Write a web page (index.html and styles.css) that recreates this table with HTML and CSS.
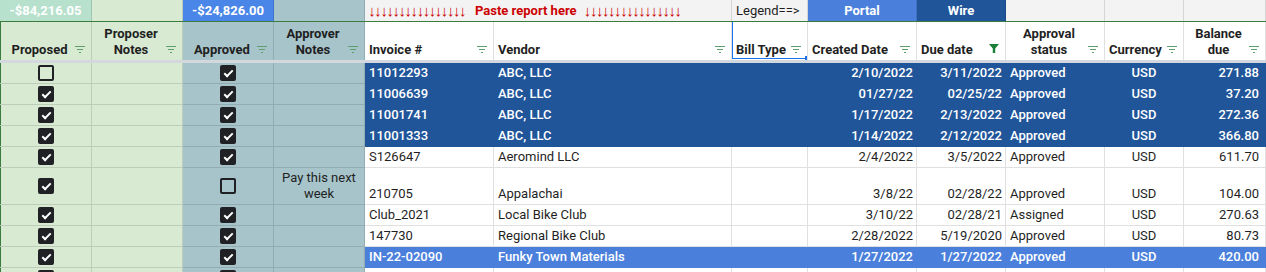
FILE: index.html
```html
<!DOCTYPE html>
<html>
<head>
<meta charset="utf-8">
<link rel="stylesheet" href="styles.css">
</head>
<body>
<div class="sheet">
  <div class="row top">
    <div class="cell tsum-g">-$84,216.05</div>
    <div class="cell bg-g"></div>
    <div class="cell tsum-b">-$24,826.00</div>
    <div class="cell bg-b"></div>
    <div class="cell paste span2"><span class="arrows"><i>↓</i><i>↓</i><i>↓</i><i>↓</i><i>↓</i><i>↓</i><i>↓</i><i>↓</i><i>↓</i><i>↓</i><i>↓</i><i>↓</i><i>↓</i><i>↓</i><i>↓</i><i>↓</i></span><span class="paste-txt">Paste report here</span><span class="arrows"><i>↓</i><i>↓</i><i>↓</i><i>↓</i><i>↓</i><i>↓</i><i>↓</i><i>↓</i><i>↓</i><i>↓</i><i>↓</i><i>↓</i><i>↓</i><i>↓</i><i>↓</i><i>↓</i></span></div>
    <div class="cell gray legend">Legend==&gt;</div>
    <div class="cell portal">Portal</div>
    <div class="cell wire">Wire</div>
    <div class="cell gray"></div>
    <div class="cell gray"></div>
    <div class="cell gray"></div>
  </div>

  <div class="row head">
    <div class="hcell bg-g first"><span class="ht center">Proposed</span><span class="fi"></span></div>
    <div class="hcell bg-g"><span class="ht center">Proposer<br>Notes</span><span class="fi"></span></div>
    <div class="hcell bg-b"><span class="ht center">Approved</span><span class="fi"></span></div>
    <div class="hcell bg-b"><span class="ht center">Approver<br>Notes</span><span class="fi"></span></div>
    <div class="hcell"><span class="ht">Invoice #</span><span class="fi"></span></div>
    <div class="hcell"><span class="ht">Vendor</span><span class="fi"></span></div>
    <div class="hcell selected"><span class="ht">Bill Type</span><span class="fi"></span><span class="handle"></span></div>
    <div class="hcell"><span class="ht">Created Date</span><span class="fi"></span></div>
    <div class="hcell"><span class="ht">Due date</span><span class="fi funnel"><svg width="10" height="9" viewBox="0 0 10 9"><path d="M0 0H10L6.2 4.4V9H3.8V4.4Z" fill="#188038"/></svg></span></div>
    <div class="hcell"><span class="ht center">Approval<br>status</span><span class="fi"></span></div>
    <div class="hcell"><span class="ht">Currency</span><span class="fi"></span></div>
    <div class="hcell last"><span class="ht center">Balance<br>due</span><span class="fi"></span></div>
  </div>

  <div class="frozen"></div>

  <div class="row data dark">
    <div class="cell bg-g first ck"><span class="cb"></span></div>
    <div class="cell bg-g"></div>
    <div class="cell bg-b ck"><span class="cb on"></span></div>
    <div class="cell bg-b"></div>
    <div class="cell">11012293</div>
    <div class="cell">ABC, LLC</div>
    <div class="cell"></div>
    <div class="cell r">2/10/2022</div>
    <div class="cell r">3/11/2022</div>
    <div class="cell">Approved</div>
    <div class="cell c">USD</div>
    <div class="cell r last">271.88</div>
  </div>
  <div class="row data dark">
    <div class="cell bg-g first ck"><span class="cb on"></span></div>
    <div class="cell bg-g"></div>
    <div class="cell bg-b ck"><span class="cb on"></span></div>
    <div class="cell bg-b"></div>
    <div class="cell">11006639</div>
    <div class="cell">ABC, LLC</div>
    <div class="cell"></div>
    <div class="cell r">01/27/22</div>
    <div class="cell r">02/25/22</div>
    <div class="cell">Approved</div>
    <div class="cell c">USD</div>
    <div class="cell r last">37.20</div>
  </div>
  <div class="row data dark">
    <div class="cell bg-g first ck"><span class="cb on"></span></div>
    <div class="cell bg-g"></div>
    <div class="cell bg-b ck"><span class="cb on"></span></div>
    <div class="cell bg-b"></div>
    <div class="cell">11001741</div>
    <div class="cell">ABC, LLC</div>
    <div class="cell"></div>
    <div class="cell r">1/17/2022</div>
    <div class="cell r">2/13/2022</div>
    <div class="cell">Approved</div>
    <div class="cell c">USD</div>
    <div class="cell r last">272.36</div>
  </div>
  <div class="row data dark">
    <div class="cell bg-g first ck"><span class="cb on"></span></div>
    <div class="cell bg-g"></div>
    <div class="cell bg-b ck"><span class="cb on"></span></div>
    <div class="cell bg-b"></div>
    <div class="cell">11001333</div>
    <div class="cell">ABC, LLC</div>
    <div class="cell"></div>
    <div class="cell r">1/14/2022</div>
    <div class="cell r">2/12/2022</div>
    <div class="cell">Approved</div>
    <div class="cell c">USD</div>
    <div class="cell r last">366.80</div>
  </div>
  <div class="row data">
    <div class="cell bg-g first ck"><span class="cb on"></span></div>
    <div class="cell bg-g"></div>
    <div class="cell bg-b ck"><span class="cb on"></span></div>
    <div class="cell bg-b"></div>
    <div class="cell">S126647</div>
    <div class="cell">Aeromind LLC</div>
    <div class="cell"></div>
    <div class="cell r">2/4/2022</div>
    <div class="cell r">3/5/2022</div>
    <div class="cell">Approved</div>
    <div class="cell c">USD</div>
    <div class="cell r last">611.70</div>
  </div>
  <div class="row data tall">
    <div class="cell bg-g first ck"><span class="cb on"></span></div>
    <div class="cell bg-g"></div>
    <div class="cell bg-b ck"><span class="cb"></span></div>
    <div class="cell bg-b note">Pay this next week</div>
    <div class="cell">210705</div>
    <div class="cell">Appalachai</div>
    <div class="cell"></div>
    <div class="cell r">3/8/22</div>
    <div class="cell r">02/28/22</div>
    <div class="cell">Approved</div>
    <div class="cell c">USD</div>
    <div class="cell r last">104.00</div>
  </div>
  <div class="row data">
    <div class="cell bg-g first ck"><span class="cb on"></span></div>
    <div class="cell bg-g"></div>
    <div class="cell bg-b ck"><span class="cb on"></span></div>
    <div class="cell bg-b"></div>
    <div class="cell">Club_2021</div>
    <div class="cell">Local Bike Club</div>
    <div class="cell"></div>
    <div class="cell r">3/10/22</div>
    <div class="cell r">02/28/21</div>
    <div class="cell">Assigned</div>
    <div class="cell c">USD</div>
    <div class="cell r last">270.63</div>
  </div>
  <div class="row data">
    <div class="cell bg-g first ck"><span class="cb on"></span></div>
    <div class="cell bg-g"></div>
    <div class="cell bg-b ck"><span class="cb on"></span></div>
    <div class="cell bg-b"></div>
    <div class="cell">147730</div>
    <div class="cell">Regional Bike Club</div>
    <div class="cell"></div>
    <div class="cell r">2/28/2022</div>
    <div class="cell r">5/19/2020</div>
    <div class="cell">Approved</div>
    <div class="cell c">USD</div>
    <div class="cell r last">80.73</div>
  </div>
  <div class="row data light">
    <div class="cell bg-g first ck"><span class="cb on"></span></div>
    <div class="cell bg-g"></div>
    <div class="cell bg-b ck"><span class="cb on"></span></div>
    <div class="cell bg-b"></div>
    <div class="cell">IN-22-02090</div>
    <div class="cell">Funky Town Materials</div>
    <div class="cell"></div>
    <div class="cell r">1/27/2022</div>
    <div class="cell r">1/27/2022</div>
    <div class="cell">Approved</div>
    <div class="cell c">USD</div>
    <div class="cell r last">420.00</div>
  </div>
  <div class="row data">
    <div class="cell bg-g first ck"><span class="cb on"></span></div>
    <div class="cell bg-g"></div>
    <div class="cell bg-b ck"><span class="cb on"></span></div>
    <div class="cell bg-b"></div>
    <div class="cell"></div>
    <div class="cell"></div>
    <div class="cell"></div>
    <div class="cell"></div>
    <div class="cell"></div>
    <div class="cell"></div>
    <div class="cell"></div>
    <div class="cell last"></div>
  </div>
</div>
</body>
</html>
```

FILE: styles.css
```css
html, body {
  margin: 0;
  padding: 0;
  background: #fff;
  overflow: hidden;
}
body {
  font-family: Roboto, "Liberation Sans", Arial, sans-serif;
  font-size: 13px;
  color: #1f1f1f;
}
.sheet {
  width: 1266px;
}
.row {
  display: grid;
  grid-template-columns: 92px 91px 91px 91px 129px 238px 76px 109px 89px 99px 79px 82px;
}
.cell, .hcell {
  box-sizing: border-box;
  border-right: 1px solid rgba(0, 0, 0, 0.12);
  line-height: 16px;
  white-space: nowrap;
  overflow: hidden;
}

/* top row */
.top {
  height: 21px;
}
.top .cell {
  display: flex;
  align-items: center;
  justify-content: center;
  font-weight: 700;
  color: #fff;
}
.span2 {
  grid-column: span 2;
}
.tsum-g { background: #b7e1cd; }
.tsum-b { background: #4a86e8; }
.bg-g { background: #d9ead3; }
.bg-b { background: #a7c4cb; }
.top .gray { background: #f3f3f3; }
.top .paste {
  background: #f3f3f3;
  justify-content: flex-start;
  padding-left: 4px;
  color: #cc0000;
}
.arrows {
  display: flex;
  width: 97px;
  flex: none;
  font-family: "Liberation Sans", Arial, sans-serif;
  font-weight: 400;
  font-size: 15px;
  line-height: 16px;
}
.arrows i {
  font-style: normal;
  width: 6.06px;
  display: flex;
  justify-content: center;
  overflow: visible;
}
.paste-txt {
  margin: 0 8px 0 9px;
}
.top .legend {
  justify-content: flex-start;
  padding-left: 4px;
  font-weight: 400;
  color: #1f1f1f;
}
.portal { background: #4a80dc; }
.wire { background: #21559a; }

/* header */
.head {
  height: 39px;
  border-top: 1px solid #3a7b3e;
  box-sizing: border-box;
}
.hcell {
  display: flex;
  align-items: flex-end;
  padding: 0 6px 2px 4px;
  font-weight: 700;
  position: relative;
}
.ht {
  flex: 1;
  text-align: left;
}
.ht.center {
  text-align: center;
}
.fi {
  width: 10px;
  height: 8px;
  margin-bottom: 5px;
  flex: none;
  background:
    linear-gradient(#5c9f6c, #5c9f6c) 0 1px / 10px 1px no-repeat,
    linear-gradient(#5c9f6c, #5c9f6c) 2px 4px / 6px 1px no-repeat,
    linear-gradient(#5c9f6c, #5c9f6c) 4px 7px / 2px 1px no-repeat;
}
.fi.funnel {
  background: none;
  height: 9px;
  display: flex;
}
.first {
  box-shadow: inset 1px 0 0 #3a7b3e;
}
.selected::after {
  content: "";
  position: absolute;
  left: 0;
  top: -1px;
  right: -1px;
  bottom: 1px;
  border: 1px solid #1a73e8;
  pointer-events: none;
}
.handle {
  position: absolute;
  right: -3px;
  bottom: -1px;
  width: 5px;
  height: 5px;
  background: #1a73e8;
  z-index: 2;
}

.frozen {
  height: 3px;
  background: #d3d8de;
}

/* data rows */
.data {
  height: 21px;
}
.data.tall {
  height: 37px;
}
.data .cell {
  border-bottom: 1px solid rgba(0, 0, 0, 0.12);
  display: flex;
  align-items: flex-end;
  padding: 0 4px 2px 4px;
}
.data .cell.r {
  justify-content: flex-end;
  padding-right: 3px;
}
.data .cell.r.last {
  padding-right: 6px;
}
.data .cell.c {
  justify-content: center;
}
.data .cell.ck {
  align-items: center;
  justify-content: center;
  padding: 0;
}
.data .cell.note {
  white-space: normal;
  text-align: center;
  justify-content: center;
  align-items: center;
  padding: 0 4px 1px;
}
.dark .cell:nth-child(n+5) {
  background: #20559a;
  border-color: #20559a;
  color: #fff;
  font-weight: 500;
}
.light .cell:nth-child(n+5) {
  background: #4a80dc;
  border-color: #4a80dc;
  color: #fff;
  font-weight: 500;
}

/* checkboxes */
.cb {
  width: 16px;
  height: 16px;
  box-sizing: border-box;
  border: 2px solid #202124;
  border-radius: 2px;
  position: relative;
}
.cb.on {
  background: #202124;
}
.cb.on::after {
  content: "";
  position: absolute;
  left: 4px;
  top: 1px;
  width: 3px;
  height: 7px;
  border: solid #fff;
  border-width: 0 2px 2px 0;
  transform: rotate(45deg);
}
```
